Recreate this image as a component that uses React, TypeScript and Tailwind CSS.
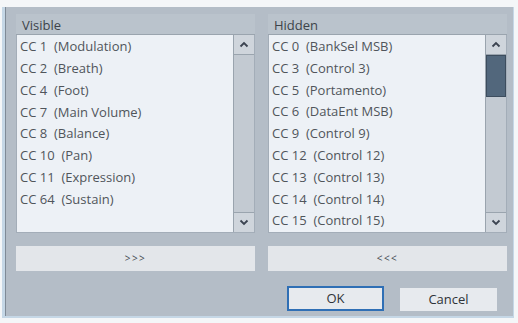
import React from "react";

const visible = [
  ["CC 1", "(Modulation)"],
  ["CC 2", "(Breath)"],
  ["CC 4", "(Foot)"],
  ["CC 7", "(Main Volume)"],
  ["CC 8", "(Balance)"],
  ["CC 10", "(Pan)"],
  ["CC 11", "(Expression)"],
  ["CC 64", "(Sustain)"],
];
const hidden = [
  ["CC 0", "(BankSel MSB)"],
  ["CC 3", "(Control 3)"],
  ["CC 5", "(Portamento)"],
  ["CC 6", "(DataEnt MSB)"],
  ["CC 9", "(Control 9)"],
  ["CC 12", "(Control 12)"],
  ["CC 13", "(Control 13)"],
  ["CC 14", "(Control 14)"],
  ["CC 15", "(Control 15)"],
];

function Arrow({ up }: { up?: boolean }) {
  return (
    <svg width="10" height="7" viewBox="0 0 10 7">
      <path
        d={up ? "M1.5 5.5 L5 2 L8.5 5.5" : "M1.5 1.5 L5 5 L8.5 1.5"}
        fill="none"
        stroke="#3b4350"
        strokeWidth="1.8"
      />
    </svg>
  );
}

function Panel({
  title,
  items,
  thumb,
  btn,
}: {
  title: string;
  items: string[][];
  thumb?: boolean;
  btn: string;
}) {
  return (
    <div className="flex flex-col w-[239px]">
      <div className="h-[21px] flex items-end pl-[6px] pb-[1px] text-[13px] leading-[16px] text-[#3d434a] bg-[#bac3cc] border-b border-[#9aa4ae]">
        {title}
      </div>
      <div className="h-[198px] flex bg-[#edf1f6] border-l border-r border-b border-[#a3adb8]">
        <div className="flex-1 flex flex-col pt-[1px] pl-[3px]">
          {items.map(([a, b]) => (
            <div
              key={a}
              className="h-[21.8px] flex items-center text-[13px] text-[#50555b] whitespace-pre"
            >
              {a}  {b}
            </div>
          ))}
        </div>
        <div className="w-[21px] flex flex-col bg-[#c3cad2] border-l border-[#9aa4ae]">
          <div className="h-[20px] flex items-center justify-center bg-[#cfd5dc] border-b border-[#9aa4ae]">
            <Arrow up />
          </div>
          <div className="flex-1 flex flex-col">
            {thumb && (
              <div className="h-[42px] bg-[#52677c] border border-[#3d4d5e]" />
            )}
          </div>
          <div className="h-[20px] flex items-center justify-center bg-[#cfd5dc] border-t border-[#9aa4ae]">
            <Arrow />
          </div>
        </div>
      </div>
      <div className="mt-[13px] h-[25px] flex items-center justify-center bg-[#e3e6ea] text-[10px] text-[#444a52] tracking-[1.5px]">
        {btn}
      </div>
    </div>
  );
}

export default function App() {
  return (
    <div
      className="w-[518px] h-[323px] bg-[#f4f6f8] pt-[7px] pl-[2px] overflow-hidden"
      style={{ fontFamily: '"Open Sans", "Noto Sans", sans-serif' }}
    >
      <div className="w-[512px] h-[311px] bg-[#c5d7e6] pl-[3px]">
        <div className="w-[508px] h-[309px] bg-[#b4bdc7] border-l border-[#7f8a96] flex flex-col pl-[10px] pt-[7px]">
          <div className="flex gap-[13px]">
            <Panel title="Visible" items={visible} btn=">>>" />
            <Panel title="Hidden" items={hidden} thumb btn="<<<" />
          </div>
          <div className="flex mt-[15px] pl-[271px] items-start">
            <div className="w-[97px] h-[25px] flex items-center justify-center bg-[#e7eaee] border-2 border-[#2f6fb5] text-[13px] text-[#2e3338]">
              OK
            </div>
            <div className="ml-[16px] mt-[2px] w-[97px] h-[23px] flex items-center justify-center bg-[#e7eaee] text-[13px] text-[#2e3338]">
              Cancel
            </div>
          </div>
        </div>
      </div>
    </div>
  );
}
